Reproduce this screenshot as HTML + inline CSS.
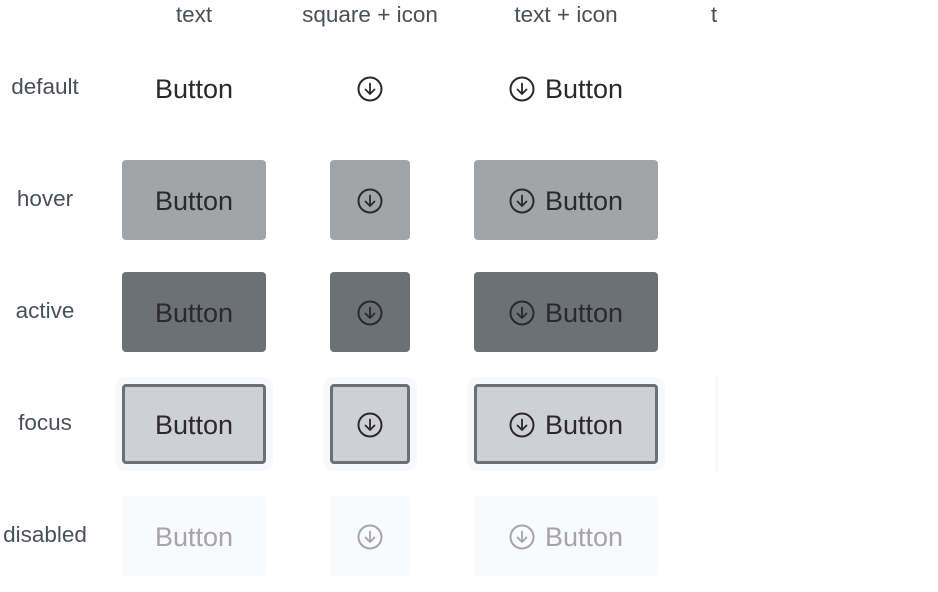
<!DOCTYPE html><html><head><style>
body{margin:0;width:938px;height:592px;background:#fff;font-family:"Liberation Sans",sans-serif;position:relative;overflow:hidden}
.h,.l{position:absolute;color:#4b4f56;font-size:22.5px;transform:translateX(-50%);white-space:nowrap;line-height:24px}
.b{position:absolute;box-sizing:border-box;border-radius:4px;display:flex;align-items:center;justify-content:center;font-size:27px;color:#2a2a2e;height:80px;padding-top:3px}
.b svg{width:26px;height:26px;margin-right:10px;margin-top:-2px}
.sq svg{margin-right:0}
.hv{background:#a1a5a8}.ac{background:#6c7175}
.fc{background:#cfd0d5;border:3px solid #6c7075;box-shadow:0 0 0 7px #f7f8fd}
.ds{background:#f9fafe;color:#a5a5a8}
</style></head><body>
<div class="h" style="left:194px;top:3px">text</div>
<div class="h" style="left:370px;top:3px">square + icon</div>
<div class="h" style="left:566px;top:3px">text + icon</div>
<div class="h" style="left:714px;top:3px">t</div>
<div class="l" style="left:45px;top:75px">default</div>
<div class="l" style="left:45px;top:187px">hover</div>
<div class="l" style="left:45px;top:299px">active</div>
<div class="l" style="left:45px;top:411px">focus</div>
<div class="l" style="left:45px;top:523px">disabled</div>
<svg width="0" height="0" style="position:absolute"><defs><g id="i"><circle cx="13" cy="13" r="11.5" fill="none" stroke="currentColor" stroke-width="2"/><path d="M13 7.5v10.5M8.5 13.5l4.5 4.5 4.5-4.5" fill="none" stroke="currentColor" stroke-width="1.8" stroke-linecap="round" stroke-linejoin="round"/></g></defs></svg>
<div class="b" style="left:122px;top:48px;width:144px">Button</div>
<div class="b sq" style="left:330px;top:48px;width:80px"><svg viewBox="0 0 26 26"><use href="#i"/></svg></div>
<div class="b" style="left:474px;top:48px;width:184px"><svg viewBox="0 0 26 26"><use href="#i"/></svg>Button</div>

<div class="b hv" style="left:122px;top:160px;width:144px">Button</div>
<div class="b sq hv" style="left:330px;top:160px;width:80px"><svg viewBox="0 0 26 26"><use href="#i"/></svg></div>
<div class="b hv" style="left:474px;top:160px;width:184px"><svg viewBox="0 0 26 26"><use href="#i"/></svg>Button</div>

<div class="b ac" style="left:122px;top:272px;width:144px">Button</div>
<div class="b sq ac" style="left:330px;top:272px;width:80px"><svg viewBox="0 0 26 26"><use href="#i"/></svg></div>
<div class="b ac" style="left:474px;top:272px;width:184px"><svg viewBox="0 0 26 26"><use href="#i"/></svg>Button</div>

<div class="b fc" style="left:122px;top:384px;width:144px">Button</div>
<div class="b sq fc" style="left:330px;top:384px;width:80px"><svg viewBox="0 0 26 26"><use href="#i"/></svg></div>
<div class="b fc" style="left:474px;top:384px;width:184px"><svg viewBox="0 0 26 26"><use href="#i"/></svg>Button</div>
<div style="position:absolute;left:715px;top:377px;width:3px;height:94px;background:#f7f8fd"></div>

<div class="b ds" style="left:122px;top:496px;width:144px">Button</div>
<div class="b sq ds" style="left:330px;top:496px;width:80px"><svg viewBox="0 0 26 26"><use href="#i"/></svg></div>
<div class="b ds" style="left:474px;top:496px;width:184px"><svg viewBox="0 0 26 26"><use href="#i"/></svg>Button</div>
</body></html>
